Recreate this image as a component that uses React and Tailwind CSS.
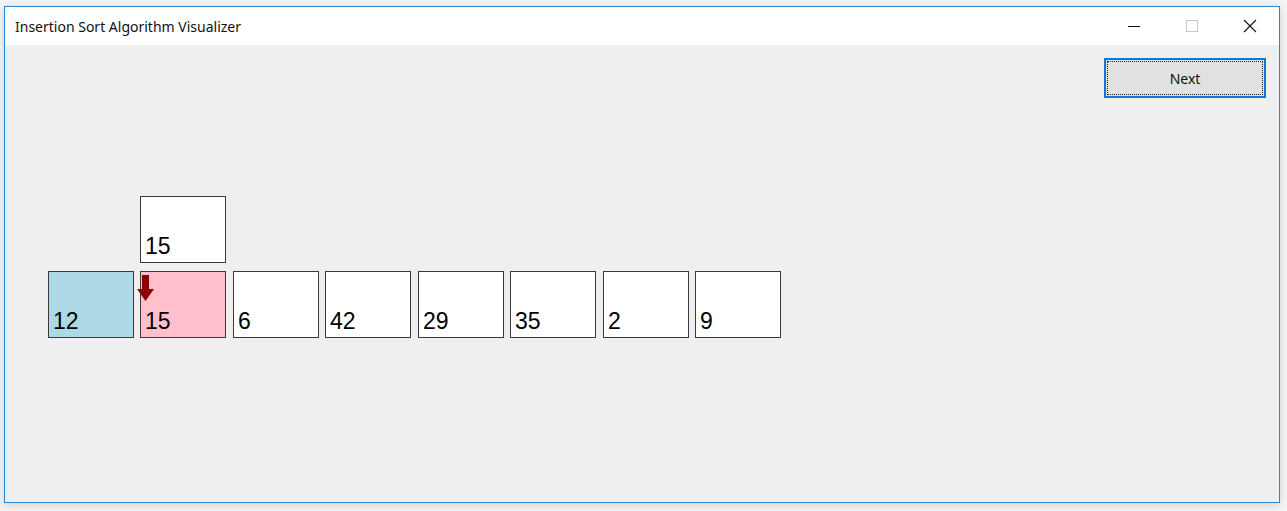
import React from "react";

const values = [12, 15, 6, 42, 29, 35, 2, 9];
const gaps = ["", "ml-[6px]", "ml-[7px]", "ml-[6px]", "ml-[7px]", "ml-[6px]", "ml-[7px]", "ml-[6px]"];

function Box({ v, color = "bg-white", extra = "", children }) {
  return (
    <div
      className={`relative w-[86px] h-[67px] border border-[#3a3a3a] ${color} ${extra} flex items-end pl-[4px] pb-[3px]`}
    >
      <span className="text-[23px] leading-[25px] text-black" style={{ fontFamily: "'Liberation Sans', Arial, sans-serif" }}>
        {v}
      </span>
      {children}
    </div>
  );
}

export default function App() {
  return (
    <div className="w-[1287px] h-[511px] bg-[#f4f4f4] pt-[6px] pl-[4px] pr-[7px] pb-[8px]">
      <div className="w-full h-full border border-[#2b86d0] flex flex-col bg-[#efefef] shadow-[0_2px_8px_rgba(0,0,0,0.15)]">
        {/* Title bar */}
        <div className="h-[38px] bg-white flex items-center shrink-0">
          <span
            className="pl-[10px] text-[14px] text-[#111]"
            style={{ fontFamily: "'Segoe UI', 'Noto Sans', 'Open Sans', sans-serif" }}
          >
            Insertion Sort Algorithm Visualizer
          </span>
          <div className="ml-auto flex h-full">
            <div className="w-[58px] flex items-center justify-center">
              <svg width="12" height="12" viewBox="0 0 12 12">
                <line x1="0" y1="6.5" x2="12" y2="6.5" stroke="#111" strokeWidth="1" />
              </svg>
            </div>
            <div className="w-[58px] flex items-center justify-center">
              <svg width="12" height="12" viewBox="0 0 12 12">
                <rect x="0.5" y="0.5" width="11" height="11" fill="none" stroke="#c8c8c8" strokeWidth="1" />
              </svg>
            </div>
            <div className="w-[58px] flex items-center justify-center">
              <svg width="14" height="14" viewBox="0 0 14 14">
                <line x1="1" y1="1" x2="13" y2="13" stroke="#111" strokeWidth="1.1" />
                <line x1="13" y1="1" x2="1" y2="13" stroke="#111" strokeWidth="1.1" />
              </svg>
            </div>
          </div>
        </div>

        {/* Content */}
        <div className="flex-1 flex flex-col">
          <div className="flex justify-end pt-[13px] pr-[13px]">
            <button
              className="w-[162px] h-[40px] border-2 border-[#0f78d4] bg-[#e1e1e1] p-[1px]"
            >
              <div
                className="w-full h-full border border-dotted border-[#222] flex items-center justify-center text-[14px] text-[#111]"
                style={{ fontFamily: "'Segoe UI', 'Noto Sans', 'Open Sans', sans-serif" }}
              >
                Next
              </div>
            </button>
          </div>

          <div className="pl-[43px] mt-[98px] flex flex-col gap-[8px]">
            <div className="pl-[92px] flex">
              <Box v={15} />
            </div>
            <div className="flex">
              {values.map((v, i) => (
                <Box
                  key={i}
                  v={v}
                  extra={gaps[i]}
                  color={i === 0 ? "bg-[#add8e6]" : i === 1 ? "bg-[#ffc0cb]" : "bg-white"}
                >
                  {i === 1 && (
                    <svg className="absolute left-[-4px] top-[3px]" width="18" height="26" viewBox="0 0 18 26">
                      <polygon points="5,0 12,0 12,14 17,14 8.5,26 0,14 5,14" fill="#8b0000" />
                    </svg>
                  )}
                </Box>
              ))}
            </div>
          </div>
        </div>
      </div>
    </div>
  );
}
